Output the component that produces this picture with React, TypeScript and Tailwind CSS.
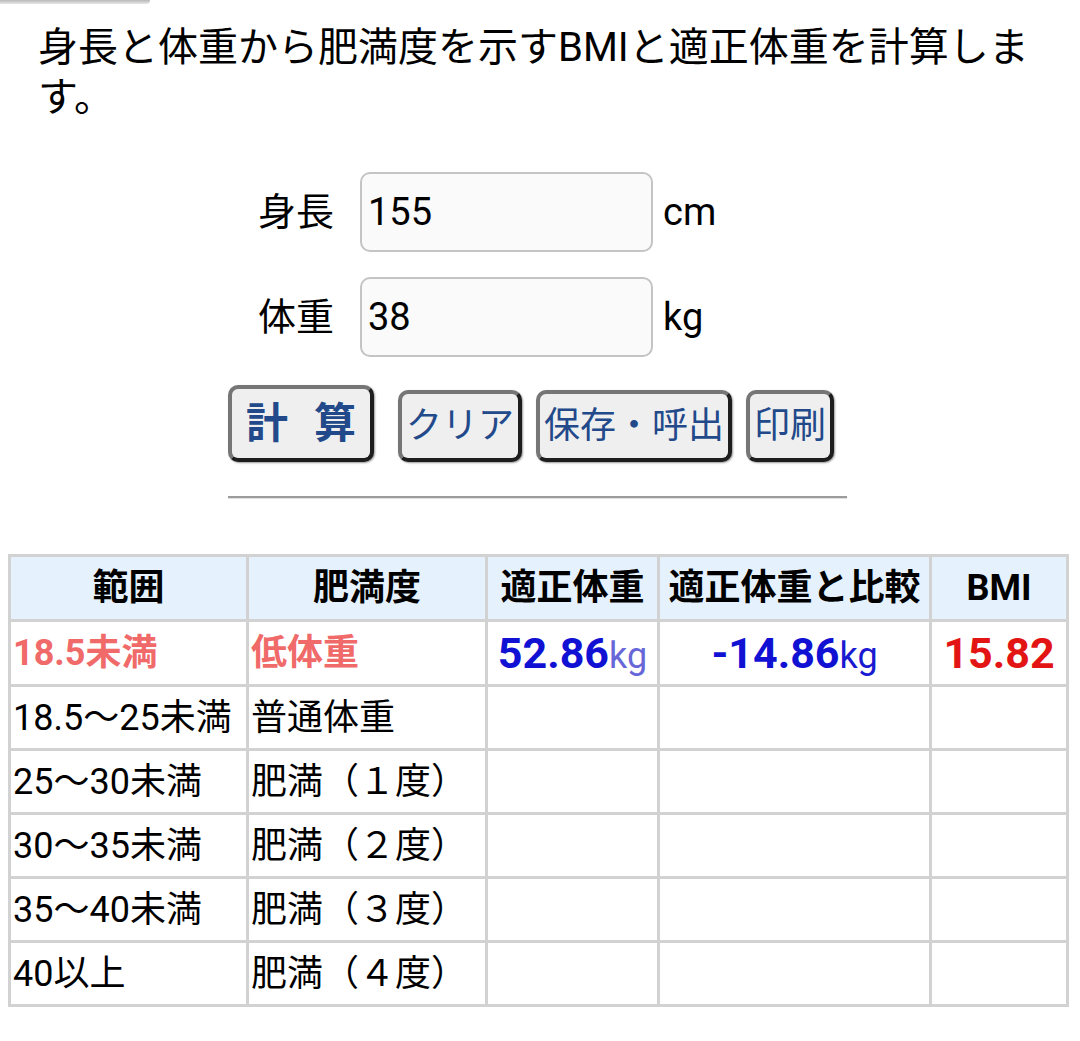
import React from 'react';

const rows = [
  ['18.5～25未満', '普通体重'],
  ['25～30未満', '肥満（１度）'],
  ['30～35未満', '肥満（２度）'],
  ['35～40未満', '肥満（３度）'],
  ['40以上', '肥満（４度）'],
];

const btn =
  'h-[72px] rounded-[10px] border-[4px] border-t-[#767676] border-l-[#767676] border-b-[#1e1e1e] border-r-[#1e1e1e] bg-[#efefef] px-[4px] text-[36px] leading-none text-[#22498a] shadow-[1px_1px_2px_rgba(0,0,0,0.4)]';

export default function App() {
  return (
    <div className="min-h-[1041px] bg-white text-black font-[Roboto,'Noto_Sans_CJK_JP',sans-serif]">
      <div className="h-[4px] w-[150px] rounded-br-[6px] bg-gradient-to-b from-[#b8b8b8] to-[#e8e8e8]" />

      <p className="mt-[19px] px-[38px] text-[40px] leading-[50px]">
        身長と体重から肥満度を示すBMIと適正体重を計算します。
      </p>

      <div className="mt-[49px] flex flex-col gap-[25px] pl-[258px]">
        {[
          ['身長', '155', 'cm'],
          ['体重', '38', 'kg'],
        ].map(([label, value, unit]) => (
          <div key={label} className="flex items-center text-[38px]">
            <span className="w-[102px]">{label}</span>
            <input
              readOnly
              value={value}
              className="h-[80px] w-[293px] rounded-[10px] border-2 border-[#c4c4c4] bg-[#fafafa] px-[6px] text-[38px] outline-none"
            />
            <span className="ml-[10px]">{unit}</span>
          </div>
        ))}
      </div>

      <div className="mt-[28px] flex items-end pl-[228px]">
        <button className={btn + ' mr-[24px] flex h-[77px] w-[146px] items-center justify-center gap-[26px] text-[42px] font-bold'}>
          <span>計</span>
          <span>算</span>
        </button>
        <button className={btn + ' mr-[14px]'}>クリア</button>
        <button className={btn + ' mr-[14px]'}>保存・呼出</button>
        <button className={btn}>印刷</button>
      </div>

      <div className="ml-[228px] mt-[34px] h-[3px] w-[619px] border-t-2 border-b border-t-[#9c9c9c] border-b-[#e0e0e0]" />

      <table className="ml-[8px] mt-[55px] w-[1058px] table-fixed border-collapse text-[36px] leading-none">
        <colgroup>
          <col className="w-[238px]" />
          <col className="w-[239px]" />
          <col className="w-[172px]" />
          <col className="w-[272px]" />
          <col className="w-[137px]" />
        </colgroup>
        <thead>
          <tr className="h-[65px] bg-[#e5f1fd] font-bold">
            {['範囲', '肥満度', '適正体重', '適正体重と比較', 'BMI'].map((h) => (
              <th key={h} className="border-[3px] border-[#d2d2d2] px-[4px] text-center font-bold">
                {h}
              </th>
            ))}
          </tr>
        </thead>
        <tbody>
          <tr className="h-[65px] font-bold">
            <td className="border-[3px] border-[#d2d2d2] px-[2px] text-[#f06a6a]">18.5未満</td>
            <td className="border-[3px] border-[#d2d2d2] px-[2px] text-[#f06a6a]">低体重</td>
            <td className="border-[3px] border-[#d2d2d2] px-[2px] text-center whitespace-nowrap">
              <span className="text-[43px] text-[#1111d4]">52.86</span>
              <span className="text-[36px] font-normal text-[#6767d8]">kg</span>
            </td>
            <td className="border-[3px] border-[#d2d2d2] px-[2px] text-center whitespace-nowrap">
              <span className="text-[43px] text-[#1111d4]">-14.86</span>
              <span className="text-[36px] font-normal text-[#1a1ad0]">kg</span>
            </td>
            <td className="border-[3px] border-[#d2d2d2] px-[2px] text-center text-[43px] text-[#e31414]">15.82</td>
          </tr>
          {rows.map(([range, level]) => (
            <tr key={range} className="h-[64px]">
              <td className="border-[3px] border-[#d2d2d2] px-[2px] whitespace-nowrap">{range}</td>
              <td className="border-[3px] border-[#d2d2d2] px-[2px] whitespace-nowrap">{level}</td>
              <td className="border-[3px] border-[#d2d2d2]" />
              <td className="border-[3px] border-[#d2d2d2]" />
              <td className="border-[3px] border-[#d2d2d2]" />
            </tr>
          ))}
        </tbody>
      </table>
    </div>
  );
}
